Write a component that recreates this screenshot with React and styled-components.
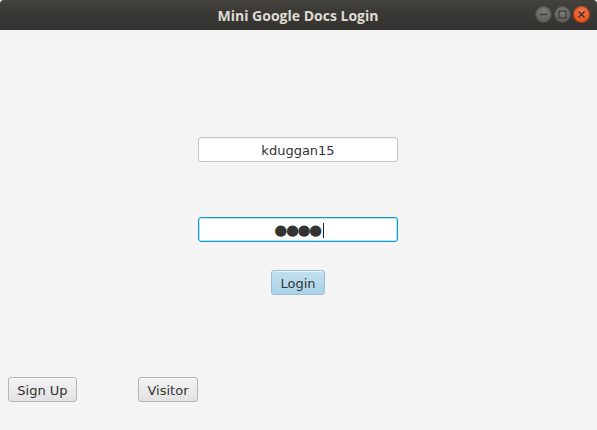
import React from 'react';
import styled, { createGlobalStyle } from 'styled-components';

const GlobalStyle = createGlobalStyle`
  html, body {
    margin: 0;
    padding: 0;
    background: #f4f4f4;
  }
`;

const Window = styled.div`
  width: 597px;
  height: 430px;
  display: flex;
  flex-direction: column;
  overflow: hidden;
  font-family: "DejaVu Sans", "Liberation Sans", sans-serif;
`;

const TitleBar = styled.div`
  position: relative;
  height: 30px;
  flex: none;
  display: flex;
  align-items: center;
  justify-content: center;
  background: linear-gradient(#44423d, #3a3935 40%, #34332f);
  border-radius: 4px 4px 0 0;
`;

const Title = styled.div`
  font-family: "Open Sans", "DejaVu Sans", sans-serif;
  font-weight: 700;
  font-size: 14px;
  color: #dfdbd2;
  margin-left: -1px;
`;

const Controls = styled.div`
  position: absolute;
  right: 7px;
  top: 6px;
  display: flex;
  gap: 2px;
`;

const CircleBtn = styled.div`
  width: 17px;
  height: 17px;
  border-radius: 50%;
  display: flex;
  align-items: center;
  justify-content: center;
  background: ${p => (p.$close
    ? 'radial-gradient(circle at 50% 35%, #f27a4d, #e5521f 70%, #c9431a)'
    : 'radial-gradient(circle at 50% 35%, #7d7b76, #62605b 70%, #55534f)')};
  box-shadow: inset 0 0 0 1px rgba(0, 0, 0, 0.25);
`;

const Content = styled.div`
  flex: 1;
  display: flex;
  flex-direction: column;
  align-items: center;
  background: #f4f4f4;
`;

const Field = styled.div`
  box-sizing: border-box;
  width: 200px;
  height: 25px;
  margin-top: ${p => p.$top}px;
  margin-left: -1px;
  padding-top: 1px;
  display: flex;
  align-items: center;
  justify-content: center;
  background: #fff;
  border-radius: 3px;
  border: 1px solid ${p => (p.$focused ? '#0d9ad2' : '#c4c4c4')};
  box-shadow: ${p => (p.$focused ? 'inset 0 0 0 1px #b9e2f3' : 'inset 0 1px 1px rgba(0,0,0,0.06)')};
  font-size: 13px;
  color: #333;
`;

const Dots = styled.span`
  font-size: 15px;
  letter-spacing: -1.5px;
  color: #333;
  line-height: 1;
  margin-left: 2px;
`;

const Caret = styled.span`
  display: inline-block;
  width: 1px;
  height: 15px;
  background: #222;
  margin-left: 2px;
`;

const Button = styled.div`
  box-sizing: border-box;
  width: ${p => p.$w}px;
  height: 25px;
  padding-top: 2px;
  display: flex;
  align-items: center;
  justify-content: center;
  border-radius: 3px;
  border: 1px solid ${p => (p.$default ? '#9cbdd0' : '#b6b6b6')};
  background: ${p => (p.$default
    ? 'linear-gradient(#c2e0ef, #a9d2e8)'
    : 'linear-gradient(#f3f3f3, #e2e2e2)')};
  box-shadow: inset 0 1px 0 rgba(255,255,255,0.6);
  font-size: 13px;
  color: #333;
`;

const LoginButton = styled(Button)`
  margin-top: 28px;
  margin-left: -1px;
`;

const BottomRow = styled.div`
  align-self: stretch;
  margin-top: 82px;
  padding-left: 8px;
  display: flex;
  gap: 61px;
`;

export default function App() {
  return (
    <Window>
      <GlobalStyle />
      <TitleBar>
        <Title>Mini Google Docs Login</Title>
        <Controls>
          <CircleBtn>
            <svg width="9" height="9" viewBox="0 0 9 9">
              <path d="M1 4.5h7" stroke="#3b3a36" strokeWidth="1.4" />
            </svg>
          </CircleBtn>
          <CircleBtn>
            <svg width="9" height="9" viewBox="0 0 9 9">
              <rect x="1" y="1" width="7" height="7" fill="none" stroke="#3b3a36" strokeWidth="1.2" />
            </svg>
          </CircleBtn>
          <CircleBtn $close>
            <svg width="9" height="9" viewBox="0 0 9 9">
              <path d="M1.5 1.5l6 6M7.5 1.5l-6 6" stroke="#3b2a22" strokeWidth="1.3" />
            </svg>
          </CircleBtn>
        </Controls>
      </TitleBar>
      <Content>
        <Field $top={107}>kduggan15</Field>
        <Field $top={55} $focused>
          <Dots>●●●●</Dots>
          <Caret />
        </Field>
        <LoginButton $w={54} $default>Login</LoginButton>
        <BottomRow>
          <Button $w={69}>Sign Up</Button>
          <Button $w={60}>Visitor</Button>
        </BottomRow>
      </Content>
    </Window>
  );
}
